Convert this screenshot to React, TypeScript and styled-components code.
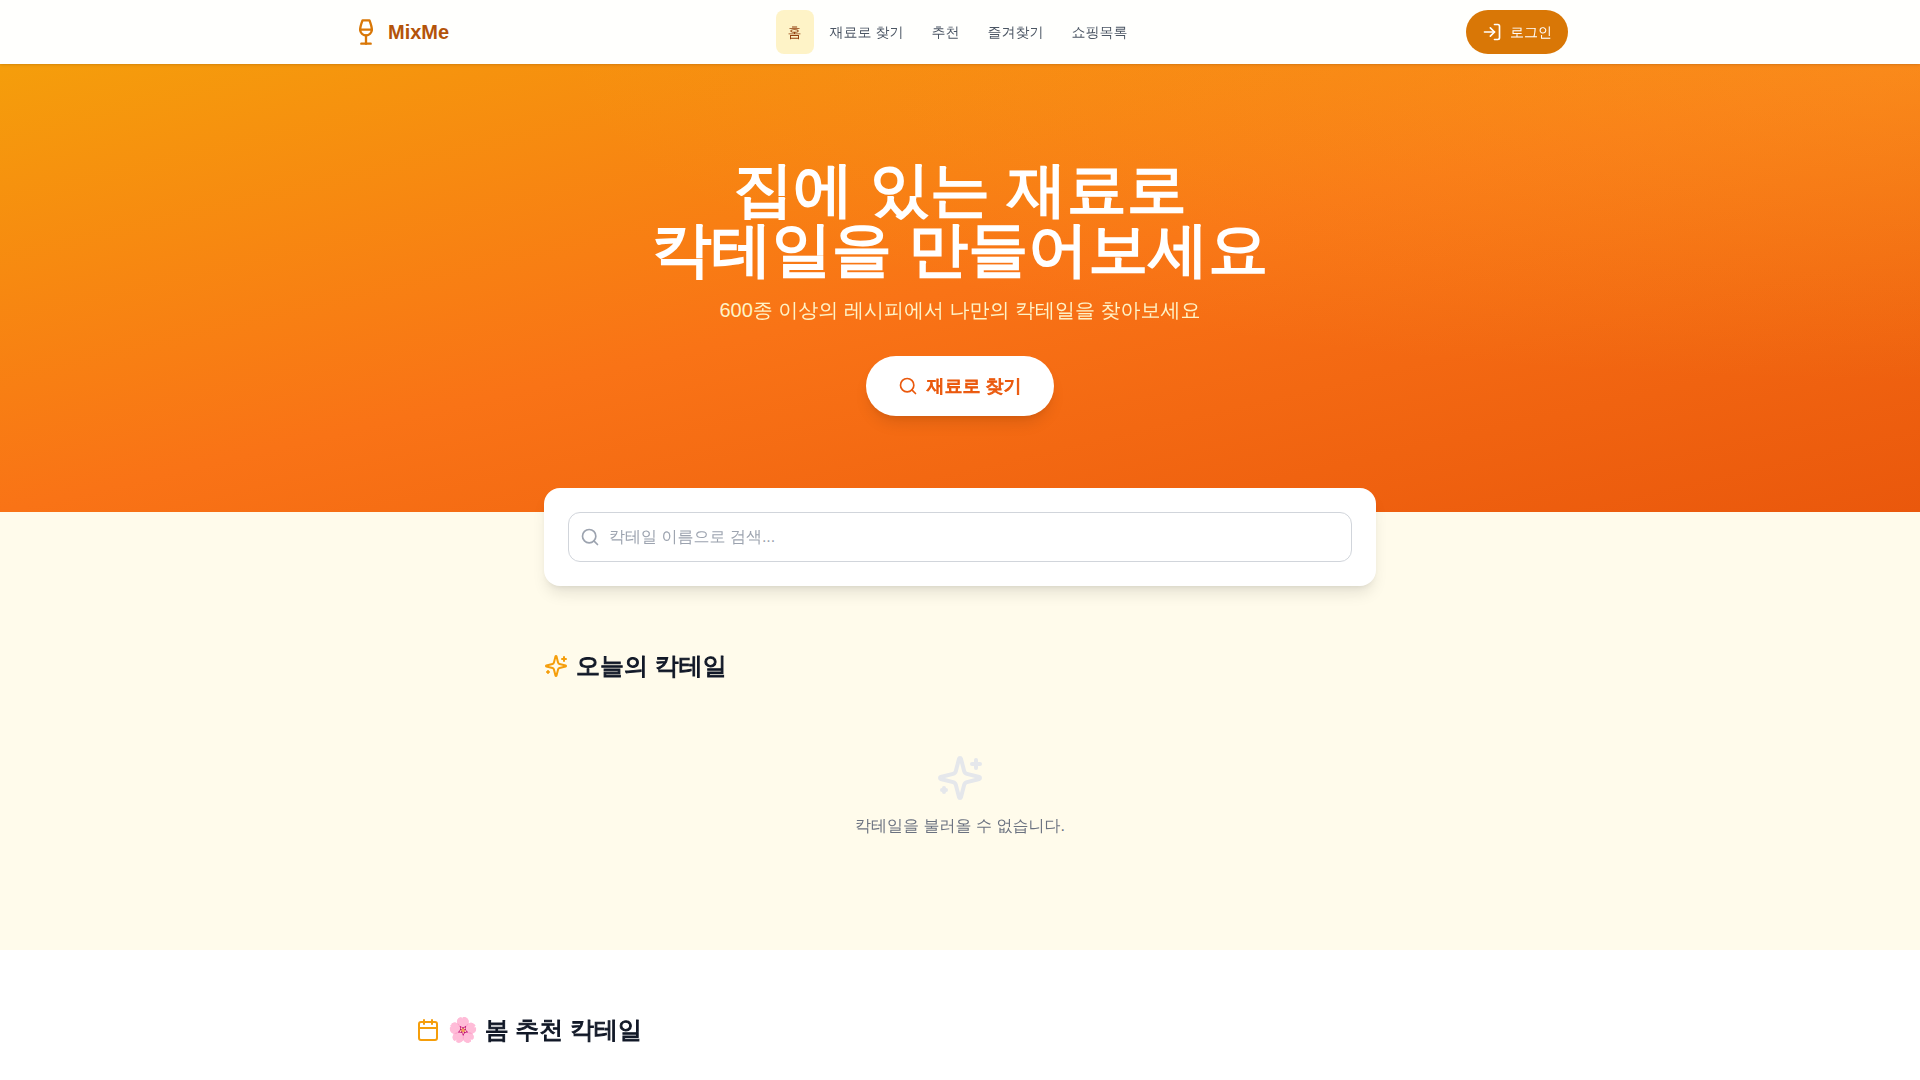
import React from "react";
import styled, { createGlobalStyle, css } from "styled-components";
import { Calendar, LogIn, Search, Wine } from "lucide-react";

const GlobalStyle = createGlobalStyle`
  *, *::before, *::after { box-sizing: border-box; }
  body {
    margin: 0;
    background: #fffbeb;
    color: #111827;
    font-family: "Liberation Sans", "WenQuanYi Zen Hei", "Noto Sans CJK KR", sans-serif;
    font-size: 16px;
    line-height: 24px;
  }
  h1, h2, p { margin: 0; }
  a { color: inherit; text-decoration: none; }
  button, input { font: inherit; }
`;

const Page = styled.div`
  display: flex;
  flex-direction: column;
  min-height: 100vh;
`;

const Main = styled.main`
  flex: 1;
  display: flex;
  flex-direction: column;
`;

const Header = styled.header`
  position: sticky;
  top: 0;
  z-index: 10;
  background: #fffffd;
  box-shadow: 0 1px 3px rgba(0, 0, 0, 0.1), 0 1px 2px -1px rgba(0, 0, 0, 0.1);
`;

const HeaderInner = styled.div`
  display: flex;
  align-items: center;
  justify-content: space-between;
  max-width: 1280px;
  height: 64px;
  margin: 0 auto;
  padding: 0 32px;
`;

const Logo = styled.a`
  display: flex;
  align-items: center;
  gap: 8px;
  color: #b45309;
  font-size: 20px;
  font-weight: 700;
  line-height: 28px;

  svg { color: #d97706; }
`;

const Nav = styled.nav`
  display: flex;
  gap: 4px;
`;

const NavLink = styled.a<{ $active?: boolean }>`
  display: flex;
  align-items: center;
  min-height: 44px;
  padding: 0 12px;
  border-radius: 8px;
  background: ${({ $active }) => ($active ? "#fef3c7" : "transparent")};
  color: ${({ $active }) => ($active ? "#92400e" : "#4b5563")};
  font-size: 14px;
  line-height: 20px;
`;

const pill = css`
  display: inline-flex;
  align-items: center;
  gap: 8px;
  border: 0;
  border-radius: 999px;
  cursor: pointer;
`;

/* The Korean face has a single weight, so headings thicken it with a stroke. */
const heavy = (stroke: number) => css`
  font-weight: 700;
  -webkit-text-stroke: ${stroke}px currentColor;
`;

const LoginButton = styled.button`
  ${pill}
  min-height: 44px;
  padding: 0 16px;
  background: #d97706;
  color: #ffffff;
  font-size: 14px;
  line-height: 20px;
`;

const Hero = styled.section`
  display: flex;
  flex-direction: column;
  align-items: center;
  padding: 96px 32px;
  background:
    radial-gradient(ellipse at top right, rgba(251, 191, 36, 0.3), transparent 50%),
    linear-gradient(to bottom right, #f59e0b 0%, #f97316 50%, #ea580c 100%);
  color: #ffffff;
  text-align: center;
`;

const HeroTitle = styled.h1`
  ${heavy(2)}
  margin-bottom: 16px;
  font-size: 60px;
  line-height: 60px;
`;

const HeroText = styled.p`
  margin-bottom: 32px;
  color: #fef3c7;
  font-size: 20px;
  line-height: 28px;
`;

const HeroButton = styled.a`
  ${pill}
  ${heavy(1)}
  padding: 16px 32px;
  background: #ffffff;
  font-size: 18px;
  line-height: 28px;
  box-shadow: 0 10px 15px -3px rgba(0, 0, 0, 0.1), 0 4px 6px -4px rgba(0, 0, 0, 0.1);

  && { color: #ea580c; }
`;

const Container = styled.div<{ $wide?: boolean }>`
  width: 100%;
  max-width: ${({ $wide }) => ($wide ? 1152 : 896)}px;
  margin: 0 auto;
  padding: 0 32px;
`;

const SearchCard = styled.form`
  position: relative;
  margin-top: -24px;
  padding: 24px;
  border-radius: 16px;
  background: #ffffff;
  box-shadow: 0 10px 15px -3px rgba(0, 0, 0, 0.1), 0 4px 6px -4px rgba(0, 0, 0, 0.1);
`;

const SearchField = styled.label`
  display: flex;
  align-items: center;
  gap: 8px;
  padding: 12px 11px;
  border: 1px solid #d1d5db;
  border-radius: 12px;
  color: #9ca3af;
`;

const SearchInput = styled.input`
  flex: 1;
  min-width: 0;
  height: 24px;
  padding: 0 1px;
  border: 0;
  outline: 0;
  background: transparent;
  color: #111827;

  &::placeholder { color: #9ca3af; opacity: 1; }
`;

const Section = styled.section`
  padding: 64px 0;
`;

const SeasonSection = styled.section`
  flex: 1;
  padding: 64px 0 32px;
  background: #ffffff;
`;

const SectionTitle = styled.h2`
  ${heavy(1)}
  display: flex;
  align-items: center;
  gap: 8px;
  font-size: 24px;
  line-height: 32px;

  svg { color: #f59e0b; }
`;

const EmptyState = styled.div`
  display: flex;
  flex-direction: column;
  align-items: center;
  gap: 12px;
  margin-top: 24px;
  padding: 48px 0;
  color: #6b7280;

  svg { color: #e5e7eb; }
`;

function SparklesIcon({ size }: { size: number }) {
  return (
    <svg
      width={size}
      height={size}
      viewBox="0 0 24 24"
      fill="none"
      stroke="currentColor"
      strokeWidth="2"
      strokeLinecap="round"
      strokeLinejoin="round"
      aria-hidden
    >
      <path d="M9.937 15.5A2 2 0 0 0 8.5 14.063l-6.135-1.582a.5.5 0 0 1 0-.962L8.5 9.936A2 2 0 0 0 9.937 8.5l1.582-6.135a.5.5 0 0 1 .963 0L14.063 8.5A2 2 0 0 0 15.5 9.937l6.135 1.581a.5.5 0 0 1 0 .964L15.5 14.063a2 2 0 0 0-1.437 1.437l-1.582 6.135a.5.5 0 0 1-.963 0z" />
      <path d="M20 3v4" />
      <path d="M22 5h-4" />
      <path d="M4 17v2" />
      <path d="M5 18H3" />
    </svg>
  );
}

const links = ["홈", "재료로 찾기", "추천", "즐겨찾기", "쇼핑목록"];

export default function App() {
  return (
    <Page lang="ko">
      <GlobalStyle />
      <Header>
        <HeaderInner>
          <Logo href="#">
            <Wine size={28} aria-hidden />
            MixMe
          </Logo>
          <Nav>
            {links.map((label, i) => (
              <NavLink key={label} href="#" $active={i === 0}>{label}</NavLink>
            ))}
          </Nav>
          <LoginButton type="button">
            <LogIn size={20} aria-hidden />
            로그인
          </LoginButton>
        </HeaderInner>
      </Header>
      <Main>
        <Hero>
          <HeroTitle>집에 있는 재료로<br />칵테일을 만들어보세요</HeroTitle>
          <HeroText>600종 이상의 레시피에서 나만의 칵테일을 찾아보세요</HeroText>
          <HeroButton href="#">
            <Search size={20} aria-hidden />
            재료로 찾기
          </HeroButton>
        </Hero>
        <Container>
          <SearchCard>
            <SearchField>
              <Search size={20} aria-hidden />
              <SearchInput type="text" aria-label="칵테일 검색" placeholder="칵테일 이름으로 검색..." />
            </SearchField>
          </SearchCard>
        </Container>
        <Section>
          <Container>
            <SectionTitle><SparklesIcon size={24} />오늘의 칵테일</SectionTitle>
            <EmptyState>
              <SparklesIcon size={48} />
              <p>칵테일을 불러올 수 없습니다.</p>
            </EmptyState>
          </Container>
        </Section>
        <SeasonSection>
          <Container $wide>
            <SectionTitle><Calendar size={24} aria-hidden />🌸 봄 추천 칵테일</SectionTitle>
          </Container>
        </SeasonSection>
      </Main>
    </Page>
  );
}
